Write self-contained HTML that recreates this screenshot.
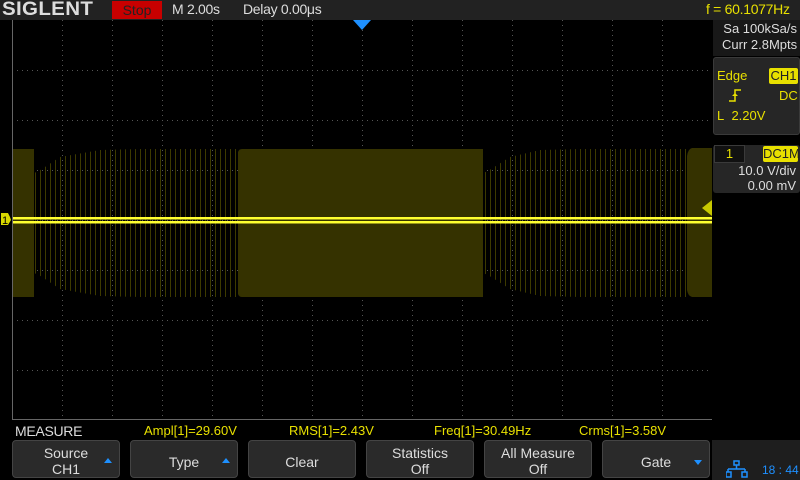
<!DOCTYPE html><html><head><style>
*{margin:0;padding:0;box-sizing:border-box}
body{width:800px;height:480px;background:#000;position:relative;overflow:hidden;font-family:"Liberation Sans",sans-serif;}
.a{position:absolute;white-space:nowrap}
.btn{position:absolute;top:440px;width:108px;height:38px;background:#2a2a2a;border:1px solid #444;border-radius:4px;color:#ddd;font-size:14px;text-align:center;line-height:16px}
.arr{position:absolute;right:7px;top:17px;width:0;height:0;border-left:4px solid transparent;border-right:4px solid transparent}
</style></head><body>
<div class="a" style="left:0;top:0;width:800px;height:20px;background:#222"></div>
<div class="a" style="left:2px;top:-1px;font-size:19px;font-weight:bold;color:#ddd;letter-spacing:0.3px;transform:scaleX(1.08);transform-origin:left">SIGLENT</div>
<div class="a" style="left:112px;top:1px;width:50px;height:18px;background:#c80000;color:#222;font-size:14px;text-align:center;line-height:18px">Stop</div>
<div class="a" style="left:172px;top:1px;color:#ddd;font-size:14px;letter-spacing:-0.3px">M 2.00s</div>
<div class="a" style="left:243px;top:1px;color:#ddd;font-size:14px;letter-spacing:-0.3px">Delay 0.00μs</div>
<div class="a" style="left:706px;top:1px;color:#e8e000;font-size:14px;letter-spacing:-0.3px">f = 60.1077Hz</div>
<svg class="a" style="left:0;top:20px" width="712" height="400">
<defs>
<pattern id="p" width="5" height="400" patternUnits="userSpaceOnUse"><rect x="0" y="0" width="1" height="400" fill="#3d3a00"/></pattern>
</defs>
<g stroke="#555" stroke-dasharray="1,4">
<line x1="62.5" y1="0" x2="62.5" y2="400"/><line x1="112.5" y1="0" x2="112.5" y2="400"/><line x1="162.5" y1="0" x2="162.5" y2="400"/><line x1="212.5" y1="0" x2="212.5" y2="400"/><line x1="262.5" y1="0" x2="262.5" y2="400"/><line x1="312.5" y1="0" x2="312.5" y2="400"/><line x1="362.5" y1="0" x2="362.5" y2="400"/><line x1="412.5" y1="0" x2="412.5" y2="400"/><line x1="462.5" y1="0" x2="462.5" y2="400"/><line x1="512.5" y1="0" x2="512.5" y2="400"/><line x1="562.5" y1="0" x2="562.5" y2="400"/><line x1="612.5" y1="0" x2="612.5" y2="400"/><line x1="662.5" y1="0" x2="662.5" y2="400"/>
<line x1="12" y1="50.5" x2="712" y2="50.5"/><line x1="12" y1="100.5" x2="712" y2="100.5"/><line x1="12" y1="150.5" x2="712" y2="150.5"/><line x1="12" y1="250.5" x2="712" y2="250.5"/><line x1="12" y1="300.5" x2="712" y2="300.5"/><line x1="12" y1="350.5" x2="712" y2="350.5"/><line x1="12" y1="200.5" x2="712" y2="200.5"/>
</g>
<path d="M34 153 L39 151 L60 137 L100 130 L140 129 L238 129 L238 277 L140 277 L100 276 L60 269 L39 255 L34 253Z" fill="url(#p)"/>
<path d="M483 153 L488 151 L510 137 L540 130 L580 129 L687 129 L687 277 L580 277 L540 276 L510 269 L488 255 L483 253Z" fill="url(#p)"/>
<rect x="12" y="129" width="22" height="148" fill="#353200"/>
<path d="M238 132 Q239 129 242 129 L483 129 L483 277 L242 277 Q239 277 238 274Z" fill="#353200"/>
<path d="M687 136 Q688 129 692 128 L712 128 L712 277 L692 277 Q688 276 687 270Z" fill="#353200"/>
<rect x="12" y="197" width="700" height="2.5" fill="#ffff30"/>
<rect x="12" y="201" width="700" height="2.5" fill="#ffff30"/>
<rect x="12" y="0" width="1" height="400" fill="#666"/>
<rect x="712" y="0" width="1" height="400" fill="#666"/>
<rect x="12" y="399" width="700" height="1" fill="#666"/>
<path d="M1 193 L8 193 L10 197 L11 200 L8 205 L1 205Z" fill="#d8d800"/>
<text x="2" y="204" font-size="11" fill="#000" font-family="Liberation Sans">1</text>
<path d="M712 180 L702 188 L712 196Z" fill="#c8c800"/>
</svg>
<svg class="a" style="left:353px;top:20px" width="18" height="10"><path d="M0 0 L18 0 L9 10Z" fill="#1e90ff"/></svg>
<div class="a" style="left:713px;top:20px;width:87px;height:400px;background:#000"></div>
<div class="a" style="left:713px;top:20px;width:87px;height:36px;background:#181818"></div>
<div class="a" style="left:722px;top:21px;color:#ddd;font-size:13px;line-height:16px;text-align:right;width:75px">Sa 100kSa/s<br>Curr 2.8Mpts</div>
<div class="a" style="left:713px;top:57px;width:87px;height:78px;background:#262626;border:1px solid #3a3a3a;border-radius:3px"></div>
<div class="a" style="left:717px;top:68px;color:#e8e000;font-size:13px">Edge</div>
<div class="a" style="left:769px;top:68px;width:29px;height:16px;background:#e8e000;color:#222;font-size:13px;text-align:center;line-height:16px;border-radius:2px">CH1</div>
<svg class="a" style="left:728px;top:88px" width="14" height="14"><path d="M1 13 L7 13 L7 2 L13 2" stroke="#e8e000" stroke-width="1.5" fill="none"/><path d="M4 8 L7 5 L10 8Z" fill="#e8e000"/></svg>
<div class="a" style="left:779px;top:88px;color:#e8e000;font-size:13px">DC</div>
<div class="a" style="left:717px;top:108px;color:#e8e000;font-size:13px">L&nbsp; 2.20V</div>
<div class="a" style="left:713px;top:145px;width:87px;height:48px;background:#262626;border-radius:3px"></div>
<div class="a" style="left:714px;top:145px;width:31px;height:18px;background:#111;border:1px solid #3a3a3a;color:#e8e000;font-size:13px;text-align:center;line-height:16px">1</div>
<div class="a" style="left:763px;top:146px;width:35px;height:16px;background:#e8e000;color:#222;font-size:13px;text-align:center;line-height:16px;border-radius:2px">DC1M</div>
<div class="a" style="left:722px;top:163px;color:#ddd;font-size:13px;line-height:15px;text-align:right;width:74px">10.0 V/div<br>0.00 mV</div>
<div class="a" style="left:15px;top:423px;color:#ddd;font-size:14px;letter-spacing:-0.3px">MEASURE</div>
<div class="a" style="left:144px;top:423px;color:#e8e000;font-size:13px">Ampl[1]=29.60V</div>
<div class="a" style="left:289px;top:423px;color:#e8e000;font-size:13px">RMS[1]=2.43V</div>
<div class="a" style="left:434px;top:423px;color:#e8e000;font-size:13px">Freq[1]=30.49Hz</div>
<div class="a" style="left:579px;top:423px;color:#e8e000;font-size:13px">Crms[1]=3.58V</div>
<div class="btn" style="left:12px;padding-top:4px">Source<br>CH1<div class="arr" style="border-bottom:5px solid #1e90ff"></div></div>
<div class="btn" style="left:130px;padding-top:13px">Type<div class="arr" style="border-bottom:5px solid #1e90ff"></div></div>
<div class="btn" style="left:248px;padding-top:13px">Clear</div>
<div class="btn" style="left:366px;padding-top:4px">Statistics<br>Off</div>
<div class="btn" style="left:484px;padding-top:4px">All Measure<br>Off</div>
<div class="btn" style="left:602px;padding-top:13px">Gate<div class="arr" style="border-top:5px solid #1e90ff;top:19px"></div></div>
<div class="a" style="left:712px;top:440px;width:88px;height:40px;background:#1e1e1e"></div>
<svg class="a" style="left:726px;top:460px" width="22" height="18" fill="none" stroke="#1e90ff" stroke-width="1.5"><rect x="8" y="1" width="5" height="4"/><path d="M10.5 5 V9 M2 9 H19 M2 9 V12 M19 9 V12"/><rect x="0" y="12" width="5" height="5"/><rect x="16" y="12" width="5" height="5"/></svg>
<div class="a" style="left:762px;top:463px;color:#1e90ff;font-size:12px">18 : 44</div>
</body></html>
